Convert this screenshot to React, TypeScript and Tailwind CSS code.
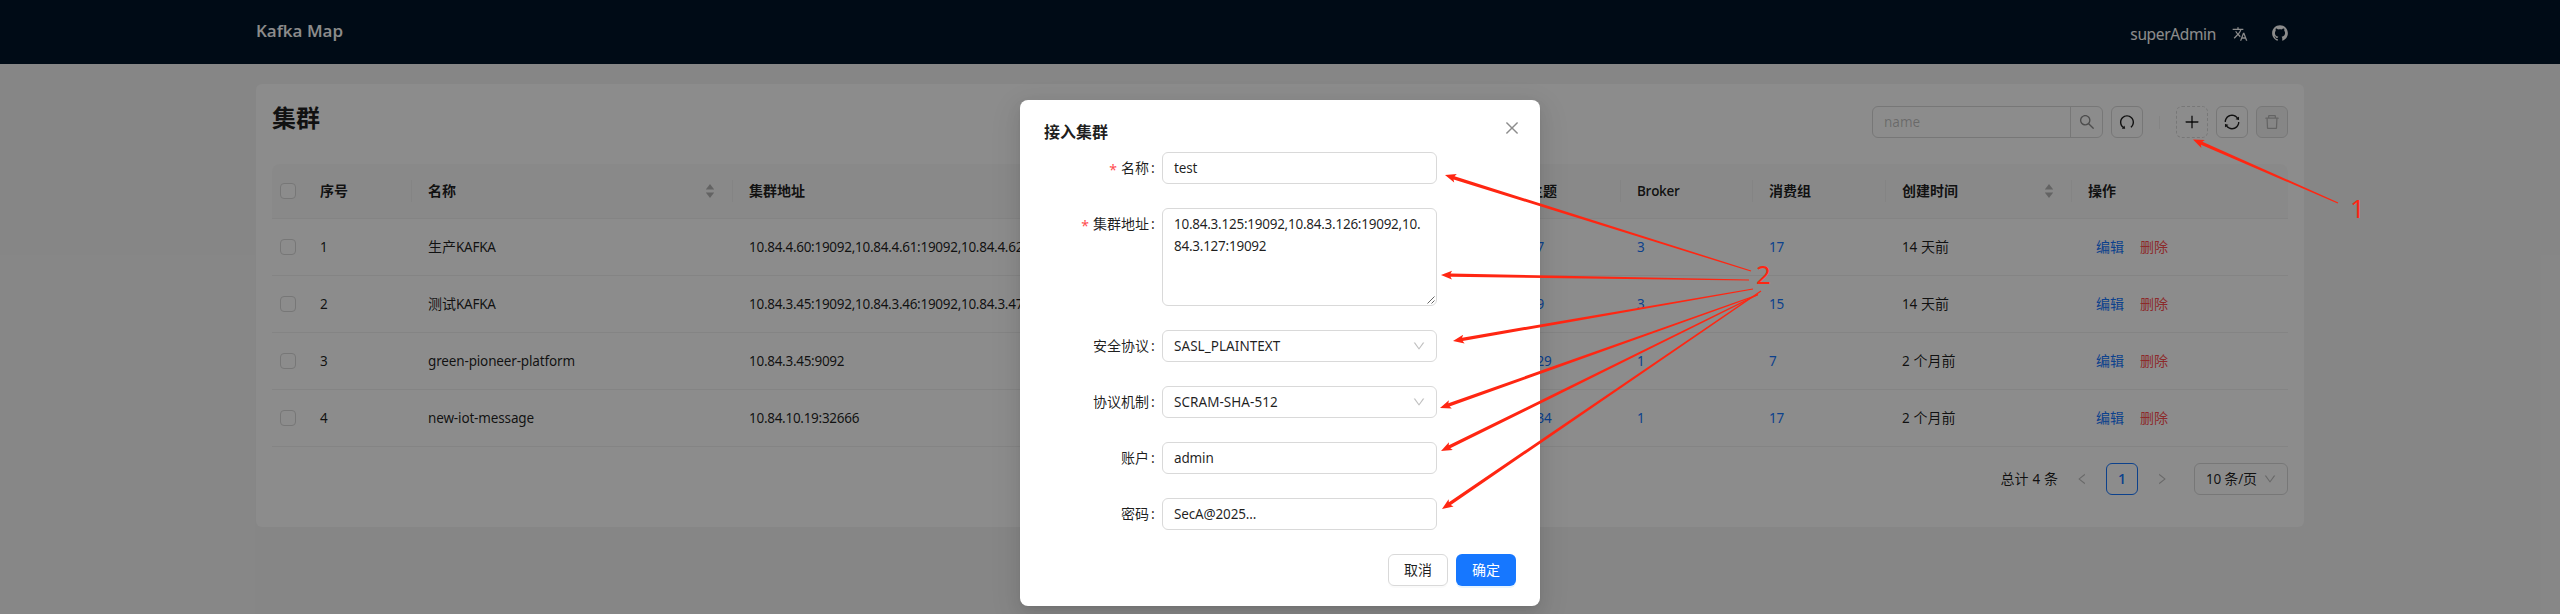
import React from 'react';
import {
  AiOutlineClose,
  AiOutlineDelete,
  AiOutlineDown,
  AiOutlineGithub,
  AiOutlineLeft,
  AiOutlinePlus,
  AiOutlineRight,
  AiOutlineSearch,
  AiOutlineSync,
  AiOutlineUndo,
} from 'react-icons/ai';
import { MdTranslate } from 'react-icons/md';

const COLS =
  'grid grid-cols-[32px_108px_321px_780px_108px_132px_133px_186px_216px] items-center';

function Latin({ children }: { children: React.ReactNode }) {
  return <span className="text-[13.5px] tracking-[-0.28px]">{children}</span>;
}

function Word({ children }: { children: React.ReactNode }) {
  return <span className="text-[13.5px] tracking-[-0.15px]">{children}</span>;
}

function Checkbox() {
  return (
    <div className="flex justify-center">
      <span className="block size-4 rounded border border-[#d9d9d9] bg-white" />
    </div>
  );
}

function Sorter() {
  return (
    <svg width="12" height="16" viewBox="0 0 12 16" fill="#b5b5b5">
      <path d="M6 1 10.2 6.4H1.8Z" />
      <path d="M6 15 10.2 9.6H1.8Z" />
    </svg>
  );
}

function HeadCell({ label, sorter, last }: { label: React.ReactNode; sorter?: boolean; last?: boolean }) {
  return (
    <div
      className={
        'flex h-[22px] items-center justify-between px-4 ' + (last ? '' : 'border-r border-[#f0f0f0]')
      }
    >
      <span>{label}</span>
      {sorter && <Sorter />}
    </div>
  );
}

type Row = {
  id: string;
  name: React.ReactNode;
  servers: string;
  topics: string;
  brokers: string;
  groups: string;
  count: string;
  unit: string;
};

const rows: Row[] = [
  {
    id: '1',
    name: (<>生产<Latin>KAFKA</Latin></>),
    servers: '10.84.4.60:19092,10.84.4.61:19092,10.84.4.62:19092',
    topics: '47',
    brokers: '3',
    groups: '17',
    count: '14',
    unit: '天前',
  },
  {
    id: '2',
    name: (<>测试<Latin>KAFKA</Latin></>),
    servers: '10.84.3.45:19092,10.84.3.46:19092,10.84.3.47:19092',
    topics: '39',
    brokers: '3',
    groups: '15',
    count: '14',
    unit: '天前',
  },
  {
    id: '3',
    name: <Word>green-pioneer-platform</Word>,
    servers: '10.84.3.45:9092',
    topics: '129',
    brokers: '1',
    groups: '7',
    count: '2',
    unit: '个月前',
  },
  {
    id: '4',
    name: <Word>new-iot-message</Word>,
    servers: '10.84.10.19:32666',
    topics: '134',
    brokers: '1',
    groups: '17',
    count: '2',
    unit: '个月前',
  },
];

function TableRow({ row }: { row: Row }) {
  return (
    <div className={COLS + ' h-[57px] border-b border-[#f0f0f0]'}>
      <Checkbox />
      <div className="px-4"><Latin>{row.id}</Latin></div>
      <div className="px-4">{row.name}</div>
      <div className="px-4"><Latin>{row.servers}</Latin></div>
      <div className="px-4 text-[#1677ff]"><Latin>{row.topics}</Latin></div>
      <div className="px-4 text-[#1677ff]"><Latin>{row.brokers}</Latin></div>
      <div className="px-4 text-[#1677ff]"><Latin>{row.groups}</Latin></div>
      <div className="flex gap-1 px-4"><Latin>{row.count}</Latin><span>{row.unit}</span></div>
      <div className="flex gap-4 px-6">
        <span className="text-[#1677ff]">编辑</span>
        <span className="text-[#ff4d4f]">删除</span>
      </div>
    </div>
  );
}

const BTN = 'flex size-8 items-center justify-center rounded-md border border-[#d9d9d9] text-[18px]';

function Page() {
  return (
    <div className="h-full bg-[#f5f5f5]">
      <header className="flex h-16 justify-between bg-[#001529] pr-[271px] pl-64 text-white">
        <div className="pt-[19px] font-['Open_Sans'] text-[17px] leading-6 font-semibold">
          Kafka Map
        </div>
        <div className="flex">
          <span className="pt-[22px] text-[15.5px] leading-6 tracking-[-0.35px]">superAdmin</span>
          <MdTranslate className="mt-[26px] ml-4 size-4" />
          <AiOutlineGithub className="mt-6 ml-[23px] size-[18px]" />
        </div>
      </header>
      <main className="mx-64 mt-5 h-[443px] rounded-md bg-white px-4">
        <div className="flex h-20 items-start justify-between">
          <h1 className="mt-[18px] text-2xl leading-8 font-semibold">集群</h1>
          <div className="mt-[22px] flex items-center">
            <div className="flex h-8 w-[231px] rounded-md border border-[#d9d9d9] bg-white">
              <div className="flex-1 pl-[11px] text-[13.5px] leading-[30px] text-black/25">name</div>
              <div className="flex w-8 items-center justify-center border-l border-[#d9d9d9] text-[18px] text-black/45">
                <AiOutlineSearch />
              </div>
            </div>
            <div className={BTN + ' ml-2'}><AiOutlineUndo /></div>
            <div className="mx-4 h-[13px] w-px bg-black/6" />
            <div className={BTN + ' border-dashed'}><AiOutlinePlus /></div>
            <div className={BTN + ' ml-2'}><AiOutlineSync /></div>
            <div className={BTN + ' ml-2 bg-black/4 text-black/25'}><AiOutlineDelete /></div>
          </div>
        </div>
        <div className={COLS + ' h-[55px] rounded-t-lg border-b border-[#f0f0f0] bg-[#fafafa] font-semibold'}>
          <Checkbox />
          <HeadCell label="序号" />
          <HeadCell label="名称" sorter />
          <HeadCell label="集群地址" />
          <HeadCell label="主题" />
          <HeadCell label={<span className="font-['Open_Sans'] text-[13.5px] tracking-[-0.3px]">Broker</span>} />
          <HeadCell label="消费组" />
          <HeadCell label="创建时间" sorter />
          <HeadCell label="操作" last />
        </div>
        {rows.map((row) => (
          <TableRow key={row.id} row={row} />
        ))}
        <div className="mt-4 flex h-8 items-center justify-end">
          <span className="flex gap-1"><span>总计</span><Latin>4</Latin><span>条</span></span>
          <span className="ml-2 flex size-8 items-center justify-center text-sm text-black/25"><AiOutlineLeft /></span>
          <span className="ml-2 flex size-8 items-center justify-center rounded-md border border-[#1677ff] font-['Open_Sans'] font-semibold text-[#1677ff]">
            1
          </span>
          <span className="ml-2 flex size-8 items-center justify-center text-sm text-black/25"><AiOutlineRight /></span>
          <span className="ml-4 flex h-8 w-[94px] items-center justify-between rounded-md border border-[#d9d9d9] pr-[10px] pl-[11px]">
            <span><Latin>10 </Latin>条<Latin>/</Latin>页</span>
            <AiOutlineDown className="size-3.5 text-black/25" />
          </span>
        </div>
      </main>
    </div>
  );
}

function Field({
  label,
  value,
  required,
  select,
}: {
  label: string;
  value: string;
  required?: boolean;
  select?: boolean;
}) {
  return (
    <div className="flex">
      <FieldLabel label={label} required={required} />
      <div className="flex h-8 w-[275px] items-center justify-between rounded-md border border-[#d9d9d9] pr-[10px] pl-[11px]">
        {select ? <span className="text-[13.5px] tracking-[0.05px]">{value}</span> : <Word>{value}</Word>}
        {select && <AiOutlineDown className="size-3.5 text-black/25" />}
      </div>
    </div>
  );
}

function FieldLabel({ label, required }: { label: string; required?: boolean }) {
  return (
    <div className="flex h-8 w-[118px] items-center justify-end pr-2">
      {required && <span className="mr-1 pt-1 font-['Noto_Sans'] text-sm leading-none text-[#ff4d4f]">*</span>}
      {label}
      <span className="ml-0.5 w-[3px]">:</span>
    </div>
  );
}

function ClusterDialog() {
  return (
    <div className="absolute top-[100px] left-[1020px] h-[506px] w-[520px] rounded-lg bg-white px-6 pt-5 shadow-[0_6px_16px_0_rgba(0,0,0,0.08),0_3px_6px_-4px_rgba(0,0,0,0.12),0_9px_28px_8px_rgba(0,0,0,0.05)]">
      <div className="mb-2 flex h-6 justify-between">
        <h2 className="text-base leading-6 font-semibold">接入集群</h2>
        <AiOutlineClose className="-mt-px mr-[-5px] size-[18px] text-black/45" />
      </div>
      <div className="flex flex-col gap-6">
        <Field label="名称" value="test" required />
        <div className="flex">
          <FieldLabel label="集群地址" required />
          <div className="flex h-[98px] w-[275px] items-end rounded-md border border-[#d9d9d9]">
            <p className="h-full flex-1 pt-1 pl-[11px] text-[13.5px] leading-[22px] tracking-[-0.25px]">
              10.84.3.125:19092,10.84.3.126:19092,10.
              <br />
              84.3.127:19092
            </p>
            <svg className="-ml-2 size-[9px]" viewBox="0 0 9 9" fill="none" stroke="#555" strokeWidth="0.9">
              <path d="M0.5 7.5 7.5 0.5M4.5 7.5 7.5 4.5" />
            </svg>
          </div>
        </div>
        <Field label="安全协议" value="SASL_PLAINTEXT" select />
        <Field label="协议机制" value="SCRAM-SHA-512" select />
        <Field label="账户" value="admin" />
        <Field label="密码" value="SecA@2025..." />
      </div>
      <div className="mt-6 flex justify-end gap-2">
        <button className="h-8 w-[60px] rounded-md border border-[#d9d9d9] shadow-[0_2px_0_rgba(0,0,0,0.02)]">取消</button>
        <button className="h-8 w-[60px] rounded-md bg-[#1677ff] text-white shadow-[0_2px_0_rgba(5,145,255,0.1)]">确定</button>
      </div>
    </div>
  );
}

type Arrow = [tipX: number, tipY: number, tailX: number, tailY: number];

const arrows: Arrow[] = [
  [2193, 139.5, 2338, 203],
  [1445, 175, 1751, 271],
  [1441, 275, 1749, 280],
  [1453, 341, 1753, 289],
  [1440, 408, 1757.5, 295],
  [1441, 451, 1758, 294.5],
  [1442, 509, 1761, 291],
];

function arrowPoints([tx, ty, ex, ey]: Arrow): string {
  const len = Math.hypot(ex - tx, ey - ty);
  const ux = (ex - tx) / len;
  const uy = (ey - ty) / len;
  const at = (along: number, side: number) =>
    `${(tx + ux * along - uy * side).toFixed(2)},${(ty + uy * along + ux * side).toFixed(2)}`;
  return [
    at(0, 0),
    at(11, 4.4),
    at(9.5, 1.7),
    at(len, 0.6),
    at(len, -0.6),
    at(9.5, -1.7),
    at(11, -4.4),
  ].join(' ');
}

function Annotations() {
  return (
    <div className="absolute inset-0 text-[26px] leading-none text-[#ff2612]">
      <svg className="absolute inset-0" width="2560" height="614" fill="#ff2612">
        {arrows.map((a) => (
          <polygon key={a.join()} points={arrowPoints(a)} />
        ))}
      </svg>
      <span className="absolute top-[195px] left-[2350px] font-['Open_Sans'] font-medium">1</span>
      <span className="absolute top-[261px] left-[1756px]">2</span>
    </div>
  );
}

export default function App() {
  return (
    <div className="relative h-[614px] w-[2560px] overflow-hidden font-['Noto_Sans','Noto_Sans_CJK_SC',sans-serif] text-sm leading-[22px] text-black/88">
      <Page />
      <div className="absolute inset-0 bg-black/45" />
      <ClusterDialog />
      <Annotations />
    </div>
  );
}
